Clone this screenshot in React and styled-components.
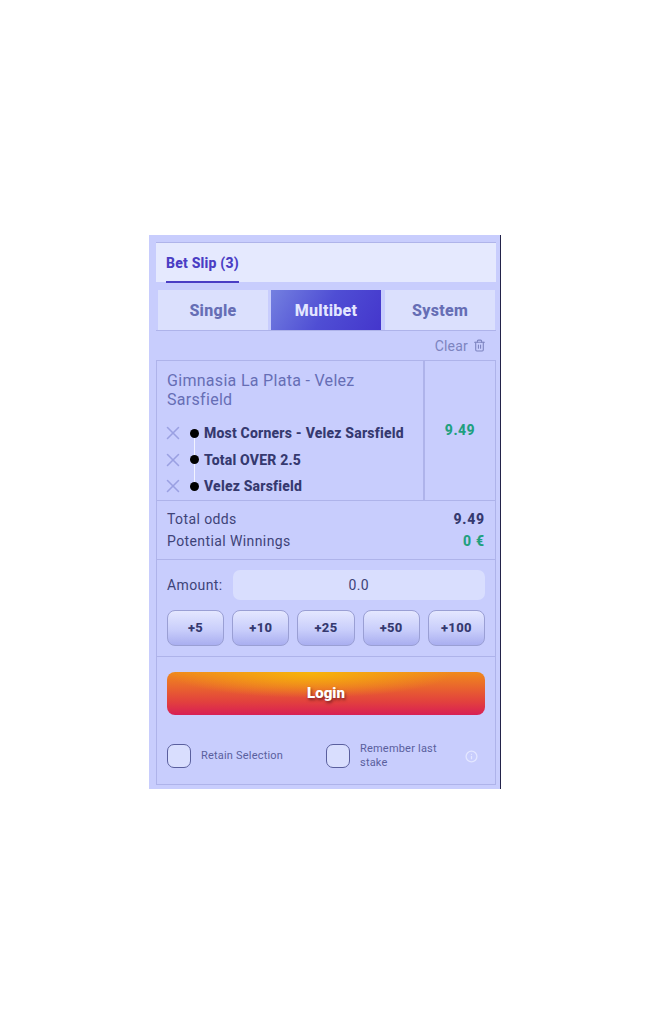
import React from 'react';
import styled, { createGlobalStyle } from 'styled-components';
import { Trash2, X, Info } from 'lucide-react';

const GlobalStyle = createGlobalStyle`
  html, body {
    margin: 0;
    background: #fff;
  }
  * {
    box-sizing: border-box;
  }
`;

const Page = styled.div`
  width: 650px;
  height: 1023px;
  padding: 235px 0 0 149px;
  font-family: Roboto, "Noto Sans", sans-serif;
`;

const Slip = styled.div`
  width: 352px;
  height: 554px;
  background: #c8cdfd;
  border-right: 1px solid #23234a;
  padding: 7px 4px 4px 7px;
  display: flex;
  flex-direction: column;
`;

const Header = styled.div`
  height: 40px;
  background: #e5e9fe;
  border-top: 1px solid #afb4ea;
  padding: 0 10px;
  display: flex;
`;

const HeaderTab = styled.div`
  height: 40px;
  line-height: 41px;
  font-size: 14px;
  font-weight: 800;
  letter-spacing: 0.2px;
  color: #4a3dc4;
  border-bottom: 2px solid #4a3dc4;
`;

const Modes = styled.div`
  margin-top: 8px;
  height: 41px;
  display: grid;
  grid-template-columns: 114px 113px 1fr;
  border-bottom: 1px solid #aeb3ea;
`;

const Mode = styled.div`
  margin: ${(p) => p.$gap};
  display: flex;
  align-items: center;
  justify-content: center;
  font-size: 16px;
  font-weight: 800;
  letter-spacing: 0.3px;
  color: ${(p) => (p.$active ? '#e3e6ff' : '#666eb5')};
  background: ${(p) =>
    p.$active ? 'linear-gradient(120deg, #7480e0 0%, #4f4ed4 50%, #4436cc 100%)' : '#dbe0fd'};
`;

const ClearRow = styled.div`
  height: 29px;
  padding-right: 10px;
  display: flex;
  align-items: center;
  justify-content: flex-end;
  gap: 5px;
  font-size: 14px;
  letter-spacing: 0.2px;
  color: #7d84c0;
`;

const Selection = styled.div`
  height: 140px;
  display: grid;
  grid-template-columns: 268px 1fr;
  border: 1px solid #aeb3ea;
  border-bottom: 0;
`;

const Legs = styled.div`
  padding: 10px 10px 0;
  border-right: 2px solid #aeb3ea;
`;

const MatchName = styled.div`
  font-size: 16px;
  line-height: 19px;
  letter-spacing: 0.3px;
  color: #666eb5;
  margin-bottom: 11px;
`;

const Leg = styled.div`
  height: 26.5px;
  display: flex;
  align-items: center;
`;

const Cross = styled(X)`
  flex: none;
  margin: -5.5px;
  color: #9aa0e2;
`;

const Dot = styled.span`
  position: relative;
  width: 9px;
  height: 9px;
  margin: 0 5px 0 12px;
  border-radius: 50%;
  background: #000;
  flex: none;

  &::after {
    content: '';
    display: ${(p) => (p.$last ? 'none' : 'block')};
    position: absolute;
    left: 4px;
    top: 9px;
    width: 1px;
    height: 18px;
    background: #f2f3ff;
  }
`;

const LegName = styled.span`
  font-size: 14px;
  font-weight: 800;
  letter-spacing: 0.2px;
  color: #35396f;
`;

const LegOdds = styled.div`
  padding-top: 61px;
  text-align: center;
  font-size: 14px;
  font-weight: 800;
  letter-spacing: 0.5px;
  color: #1fa07f;
`;

const Summary = styled.div`
  height: 59px;
  padding: 7px 10px 0;
  border: 1px solid #aeb3ea;
  border-bottom: 0;
`;

const SummaryRow = styled.div`
  height: 22px;
  display: flex;
  align-items: center;
  justify-content: space-between;
  font-size: 14px;
  letter-spacing: 0.4px;
  color: #3e4378;
`;

const SummaryValue = styled.span`
  font-weight: 800;
  letter-spacing: 0.8px;
  color: ${(p) => (p.$green ? '#1fa07f' : '#35396f')};
`;

const Stake = styled.div`
  height: 97px;
  padding: 10px 10px 0;
  border: 1px solid #aeb3ea;
  border-bottom: 0;
`;

const AmountRow = styled.div`
  display: flex;
  align-items: center;
  gap: 10px;
  font-size: 14px;
  letter-spacing: 0.4px;
  color: #3e4378;
`;

const AmountInput = styled.div`
  flex: 1;
  height: 30px;
  line-height: 30px;
  border-radius: 7px;
  background: #d9defe;
  text-align: center;
`;

const Quick = styled.div`
  margin-top: 10px;
  display: grid;
  grid-template-columns: repeat(5, 1fr);
  gap: 8px;
`;

const QuickButton = styled.div`
  height: 36px;
  line-height: 34px;
  text-align: center;
  font-size: 13px;
  font-weight: 800;
  letter-spacing: 0.3px;
  color: #35396f;
  border: 1px solid #9a9fd4;
  border-radius: 8px;
  background: linear-gradient(180deg, #e4e7ff 0%, #c9cefb 55%, #a9aef0 100%);
`;

const Footer = styled.div`
  flex: 1;
  padding: 15px 10px 0;
  border: 1px solid #aeb3ea;
`;

const LoginButton = styled.div`
  height: 43px;
  line-height: 43px;
  border-radius: 8px;
  text-align: center;
  font-size: 15px;
  font-weight: 900;
  color: #fff;
  text-shadow: 1px 2px 3px rgba(60, 10, 20, 0.6);
  background:
    radial-gradient(ellipse 45% 60% at 45% 0%, #f7b40a 0%, rgba(247, 180, 10, 0) 100%),
    linear-gradient(180deg, #f08a1c 0%, #e2403e 70%, #d81f55 100%);
`;

const Options = styled.div`
  margin-top: 27px;
  display: grid;
  grid-template-columns: 159px 1fr 20px;
  align-items: center;
  font-size: 11px;
  line-height: 14px;
  letter-spacing: 0.2px;
  color: #5a5f9e;
`;

const Option = styled.div`
  display: flex;
  align-items: center;
  gap: 10px;
`;

const Check = styled.span`
  width: 24px;
  height: 24px;
  flex: none;
  background: #d9defe;
  border: 1px solid #5a5f9e;
  border-radius: 7px;
`;

const OptionLabel = styled.span`
  max-width: 90px;
`;

const amounts = ['+5', '+10', '+25', '+50', '+100'];
const legs = ['Most Corners - Velez Sarsfield', 'Total OVER 2.5', 'Velez Sarsfield'];

const App = () => (
  <Page>
    <GlobalStyle />
    <Slip>
      <Header>
        <HeaderTab>Bet Slip (3)</HeaderTab>
      </Header>
      <Modes>
        <Mode $gap="0 2px">Single</Mode>
        <Mode $gap="0 2px 0 1px" $active>Multibet</Mode>
        <Mode $gap="0 1px 0 2px">System</Mode>
      </Modes>
      <ClearRow>
        Clear <Trash2 size={13} />
      </ClearRow>
      <Selection>
        <Legs>
          <MatchName>Gimnasia La Plata - Velez Sarsfield</MatchName>
          {legs.map((name, i) => (
            <Leg key={name}>
              <Cross size={22} strokeWidth={1.7} />
              <Dot $last={i === legs.length - 1} />
              <LegName>{name}</LegName>
            </Leg>
          ))}
        </Legs>
        <LegOdds>9.49</LegOdds>
      </Selection>
      <Summary>
        <SummaryRow>
          Total odds <SummaryValue>9.49</SummaryValue>
        </SummaryRow>
        <SummaryRow>
          Potential Winnings <SummaryValue $green>0 €</SummaryValue>
        </SummaryRow>
      </Summary>
      <Stake>
        <AmountRow>
          Amount:
          <AmountInput>0.0</AmountInput>
        </AmountRow>
        <Quick>
          {amounts.map((a) => (
            <QuickButton key={a}>{a}</QuickButton>
          ))}
        </Quick>
      </Stake>
      <Footer>
        <LoginButton>Login</LoginButton>
        <Options>
          <Option>
            <Check />
            <OptionLabel>Retain Selection</OptionLabel>
          </Option>
          <Option>
            <Check />
            <OptionLabel>Remember last stake</OptionLabel>
          </Option>
          <Info size={13} strokeWidth={2.4} color="#e3e6ff" />
        </Options>
      </Footer>
    </Slip>
  </Page>
);

export default App;
